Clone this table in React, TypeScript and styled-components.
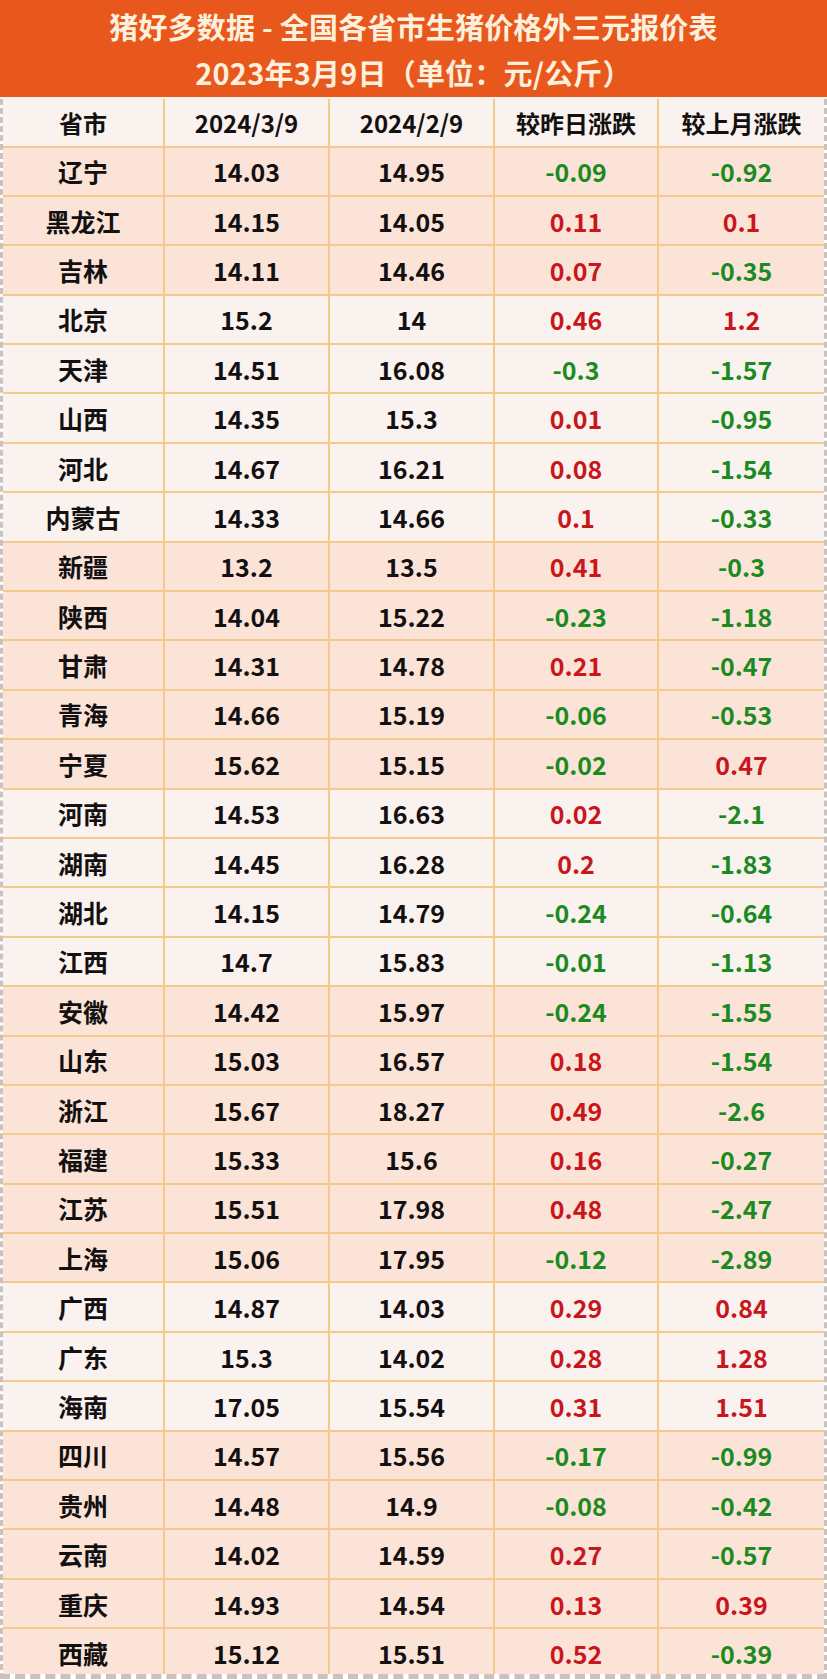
import styled, { createGlobalStyle } from 'styled-components';

const GlobalStyle = createGlobalStyle`
    html, body {
        margin: 0;
        padding: 0;
        background: #ffffff;
    }
    body {
        font-family: "Noto Sans CJK SC", "Noto Sans", sans-serif;
    }
`;

/* ---------- dados ---------- */
type Row = [string, string, string, string, string];

const rows: Row[] = [
    ['辽宁', '14.03', '14.95', '-0.09', '-0.92'],
    ['黑龙江', '14.15', '14.05', '0.11', '0.1'],
    ['吉林', '14.11', '14.46', '0.07', '-0.35'],
    ['北京', '15.2', '14', '0.46', '1.2'],
    ['天津', '14.51', '16.08', '-0.3', '-1.57'],
    ['山西', '14.35', '15.3', '0.01', '-0.95'],
    ['河北', '14.67', '16.21', '0.08', '-1.54'],
    ['内蒙古', '14.33', '14.66', '0.1', '-0.33'],
    ['新疆', '13.2', '13.5', '0.41', '-0.3'],
    ['陕西', '14.04', '15.22', '-0.23', '-1.18'],
    ['甘肃', '14.31', '14.78', '0.21', '-0.47'],
    ['青海', '14.66', '15.19', '-0.06', '-0.53'],
    ['宁夏', '15.62', '15.15', '-0.02', '0.47'],
    ['河南', '14.53', '16.63', '0.02', '-2.1'],
    ['湖南', '14.45', '16.28', '0.2', '-1.83'],
    ['湖北', '14.15', '14.79', '-0.24', '-0.64'],
    ['江西', '14.7', '15.83', '-0.01', '-1.13'],
    ['安徽', '14.42', '15.97', '-0.24', '-1.55'],
    ['山东', '15.03', '16.57', '0.18', '-1.54'],
    ['浙江', '15.67', '18.27', '0.49', '-2.6'],
    ['福建', '15.33', '15.6', '0.16', '-0.27'],
    ['江苏', '15.51', '17.98', '0.48', '-2.47'],
    ['上海', '15.06', '17.95', '-0.12', '-2.89'],
    ['广西', '14.87', '14.03', '0.29', '0.84'],
    ['广东', '15.3', '14.02', '0.28', '1.28'],
    ['海南', '17.05', '15.54', '0.31', '1.51'],
    ['四川', '14.57', '15.56', '-0.17', '-0.99'],
    ['贵州', '14.48', '14.9', '-0.08', '-0.42'],
    ['云南', '14.02', '14.59', '0.27', '-0.57'],
    ['重庆', '14.93', '14.54', '0.13', '0.39'],
    ['西藏', '15.12', '15.51', '0.52', '-0.39'],
];

/* linhas claras (índices) */
const lightRows = new Set([3, 4, 5, 6, 7, 13, 14, 15, 16, 23, 24, 25]);

const headers = ['省市', '2024/3/9', '2024/2/9', '较昨日涨跌', '较上月涨跌'];

/* ---------- estilos ---------- */
const Page = styled.div`
    width: 827px;
    height: 1679px;
    display: flex;
    flex-direction: column;
    overflow: hidden;
`;

const TitleBar = styled.div`
    height: 97px;
    background: #e8581c;
    color: #fdf0dc;
    display: flex;
    flex-direction: column;
    align-items: center;
    justify-content: center;
    border-bottom: 2px solid #fbf3ef;
`;

const TitleLine = styled.div`
    font-size: 29px;
    font-weight: 700;
    line-height: 46px;
    letter-spacing: 0.2px;
    white-space: nowrap;
`;

const TableFrame = styled.div`
    flex: 1;
    min-height: 0;
    overflow: hidden;
    border-left: 3px dashed #c9c2be;
    border-right: 3px dashed #c9c2be;
    border-bottom: 5px dashed #c9c2be;
`;

const GridRow = styled.div<{ $bg: string; $h: number }>`
    display: grid;
    grid-template-columns: 162px 165px 165px 164px 1fr;
    height: ${p => p.$h}px;
    box-sizing: border-box;
    background: ${p => p.$bg};
    border-bottom: 2px solid #f4c98c;
`;

const Cell = styled.div<{ $color?: string; $size?: number }>`
    display: flex;
    align-items: center;
    justify-content: center;
    border-right: 2px solid #f4c98c;
    font-size: ${p => p.$size ?? 25}px;
    font-weight: 700;
    color: ${p => p.$color ?? '#121010'};
    white-space: nowrap;

    &:last-child {
        border-right: none;
    }
`;

const diffColor = (v: string) => (v.startsWith('-') ? '#1b8a1f' : '#c8161d');

export default function App() {
    return (
        <>
            <GlobalStyle />
            <Page>
                <TitleBar>
                    <TitleLine>猪好多数据 - 全国各省市生猪价格外三元报价表</TitleLine>
                    <TitleLine>2023年3月9日（单位：元/公斤）</TitleLine>
                </TitleBar>

                <TableFrame>
                    <GridRow $bg="#f9f2ef" $h={48.5}>
                        {headers.map(h => (
                            <Cell key={h} $size={24}>{h}</Cell>
                        ))}
                    </GridRow>

                    {rows.map((r, i) => (
                        <GridRow key={r[0]} $bg={lightRows.has(i) ? '#faf2ef' : '#fbe3d7'} $h={49.4}>
                            <Cell>{r[0]}</Cell>
                            <Cell>{r[1]}</Cell>
                            <Cell>{r[2]}</Cell>
                            <Cell $color={diffColor(r[3])}>{r[3]}</Cell>
                            <Cell $color={diffColor(r[4])}>{r[4]}</Cell>
                        </GridRow>
                    ))}
                </TableFrame>
            </Page>
        </>
    );
}
